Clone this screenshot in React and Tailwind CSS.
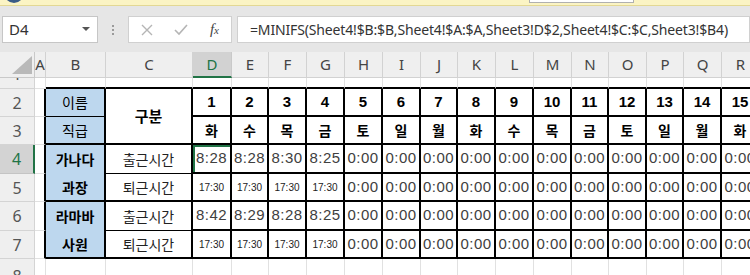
import { Fragment } from 'react';

const COLS = ['A', 'B', 'C', 'D', 'E', 'F', 'G', 'H', 'I', 'J', 'K', 'L', 'M', 'N', 'O', 'P', 'Q', 'R'];
const DAYS = ['화', '수', '목', '금', '토', '일', '월', '화', '수', '목', '금', '토', '일', '월', '화'];
const zeros = n => Array.from({ length: n }, () => '0:00');

const DATA = {
  4: ['8:28', '8:28', '8:30', '8:25', ...zeros(11)],
  5: ['17:30', '17:30', '17:30', '17:30', ...zeros(11)],
  6: ['8:42', '8:29', '8:28', '8:25', ...zeros(11)],
  7: ['17:30', '17:30', '17:30', '17:30', ...zeros(11)],
};

const NAMES = {
  2: { text: '이름', bottom: 'border-b border-b-black', bold: false },
  3: { text: '직급', bottom: 'border-b-2 border-b-black', bold: false },
  4: { text: '가나다', bottom: 'border-b-0', bold: true },
  5: { text: '과장', bottom: 'border-b-2 border-b-black', bold: true },
  6: { text: '라마바', bottom: 'border-b-0', bold: true },
  7: { text: '사원', bottom: 'border-b-2 border-b-black', bold: true },
};

const KR = "font-['Noto_Sans_CJK_KR',sans-serif]";
const rowHdr = 'flex items-center justify-center overflow-hidden bg-[#efefef] border-r border-b border-[#d4d4d4] text-[16px] text-[#555]';
const blank = 'bg-white border-r border-b border-[#e1e1e1]';
const tcell = 'flex items-center justify-center overflow-hidden bg-white border-r-2 border-b-2 border-black';

function RowHeader({ n, active }) {
  if (active) {
    return (
      <div className="flex items-center justify-center bg-[#d3d3d3] border-r-2 border-r-[#217346] border-b border-b-[#c4c4c4] text-[16px] text-[#217346]">
        {n}
      </div>
    );
  }
  return <div className={rowHdr}>{n}</div>;
}

function FormulaBar() {
  return (
    <div className="flex items-center h-[27px] mt-[10px] mb-[9px]">
      <div className="ml-[2px] w-[96px] h-full bg-white border border-[#c6c6c6] flex items-center justify-between pl-[6px] pr-[7px] text-[15px] text-[#333]">
        <span>D4</span>
        <svg width="8" height="5" viewBox="0 0 8 5"><path d="M0 0h8L4 4z" fill="#555" /></svg>
      </div>
      <div className="w-[30px] flex flex-col items-center gap-[2px]">
        <span className="w-[2px] h-[2px] bg-[#9a9a9a]" />
        <span className="w-[2px] h-[2px] bg-[#9a9a9a]" />
        <span className="w-[2px] h-[2px] bg-[#9a9a9a]" />
      </div>
      <div className="w-[104px] h-full bg-white border border-[#d0d0d0] flex items-center justify-between px-[12px]">
        <svg width="12" height="12" viewBox="0 0 12 12"><path d="M1 1l10 10M11 1L1 11" stroke="#b5b5b5" strokeWidth="1.4" /></svg>
        <svg width="14" height="12" viewBox="0 0 14 12"><path d="M1 6l4 4 8-9" stroke="#b5b5b5" strokeWidth="1.6" fill="none" /></svg>
        <span className="font-['Liberation_Serif',serif] italic text-[15px] text-[#444] leading-none">
          f<span className="text-[11px]">x</span>
        </span>
      </div>
      <div className="ml-[5px] flex-1 h-full bg-white border border-[#d0d0d0] flex items-center pl-[12px] text-[14px] tracking-[-0.15px] text-[#333] whitespace-nowrap overflow-hidden">
        =MINIFS(Sheet4!$B:$B,Sheet4!$A:$A,Sheet3!D$2,Sheet4!$C:$C,Sheet3!$B4)
      </div>
    </div>
  );
}

function DataCell({ r, i, value }) {
  const small = value === '17:30';
  const text = small
    ? "font-['Liberation_Sans',sans-serif] text-[10px] text-[#222]"
    : "font-['Liberation_Sans',sans-serif] text-[15px] tracking-[0.5px] text-[#404040]";
  if (r === 4 && i === 0) {
    return (
      <div className={`${tcell} relative ${text}`}>
        <span className="whitespace-nowrap">{value}</span>
        <div className="absolute left-0 top-0 -right-[2px] -bottom-[2px] border-2 border-[#217346]" />
        <div className="absolute -right-[5px] -bottom-[5px] w-[6px] h-[6px] bg-[#217346] border border-white" />
      </div>
    );
  }
  return (
    <div className={`${tcell} ${text}`}>
      <span className="whitespace-nowrap">{value}</span>
    </div>
  );
}

export default function App() {
  const dataCols = COLS.slice(3);
  return (
    <div className="w-[750px] h-[275px] overflow-hidden bg-[#e6e6e6] font-['Noto_Sans',sans-serif]">
      <div className="relative h-[6px] bg-[#fbf4c4] border-b border-[#e3d894] overflow-hidden">
        <div className="absolute left-[4px] -top-[17px] w-[20px] h-[20px] rounded-full bg-[#3a5c86]" />
        <div className="absolute left-[529px] -top-[10px] w-[105px] h-[13px] bg-white border border-[#b0b0b0]" />
      </div>
      <FormulaBar />

      <div className="grid grid-cols-[35px_11px_60px_87px_39px_37px_38px_38px_38px_38px_37px_38px_38px_38px_37px_38px_37px_38px_38px] grid-rows-[26px_11px_28px_28px_29px_28px_29px_28px_30px]">
        {/* column headers */}
        <div className="relative bg-[#efefef] border-r border-b border-[#c9c9c9]">
          <svg className="absolute right-[2px] bottom-[3px]" width="20" height="18" viewBox="0 0 20 18">
            <path d="M20 0V18H0z" fill="#b9b9b9" />
          </svg>
        </div>
        {COLS.map(c =>
          c === 'D' ? (
            <div key={c} className="flex items-center justify-center bg-[#d2d2d2] border-r border-[#c9c9c9] border-b-2 border-b-[#217346] text-[15px] text-[#217346]">
              {c}
            </div>
          ) : (
            <div key={c} className="flex items-center justify-center overflow-hidden bg-[#efefef] border-r border-b border-[#d2d2d2] text-[15px] text-[#444]">
              {c}
            </div>
          )
        )}

        {/* row 1 */}
        <div className="flex justify-center overflow-hidden bg-[#efefef] border-r border-b border-[#d4d4d4] text-[16px] text-[#555]">
          <span className="-mt-[16px]">1</span>
        </div>
        <div className={blank} />
        {COLS.slice(1).map(c => (
          <div key={c} className="bg-white border-r border-[#e1e1e1] border-b-2 border-b-black" />
        ))}

        {[2, 3, 4, 5, 6, 7].map(r => (
          <Fragment key={r}>
            <RowHeader n={r} active={r === 4} />
            <div className="bg-white border-b border-[#e1e1e1] border-r-2 border-r-black" />
            <div className={`flex items-center justify-center bg-[#bdd7ee] border-r-2 border-r-black ${NAMES[r].bottom} ${KR} text-[14px] text-black ${NAMES[r].bold ? 'font-bold' : ''}`}>
              {NAMES[r].text}
            </div>
            {r === 2 && (
              <div className={`row-span-2 ${tcell} ${KR} text-[15px] font-bold text-black`}>구분</div>
            )}
            {r >= 4 && (
              <div className={`flex items-center justify-center bg-white border-r-2 border-r-black ${r % 2 === 0 ? 'border-b border-b-black' : 'border-b-2 border-b-black'} ${KR} text-[14px] text-[#222]`}>
                {r % 2 === 0 ? '출근시간' : '퇴근시간'}
              </div>
            )}
            {dataCols.map((c, i) => {
              if (r === 2) {
                return (
                  <div key={c} className={`${tcell} font-['Liberation_Sans',sans-serif] font-bold text-[15px] text-black`}>
                    {i + 1}
                  </div>
                );
              }
              if (r === 3) {
                return (
                  <div key={c} className={`${tcell} ${KR} font-bold text-[14px] text-black`}>
                    {DAYS[i]}
                  </div>
                );
              }
              return <DataCell key={c} r={r} i={i} value={DATA[r][i]} />;
            })}
          </Fragment>
        ))}

        {/* row 8 */}
        <div className="flex justify-center items-start overflow-hidden bg-[#efefef] border-r border-[#d4d4d4] text-[16px] text-[#555]">
          <span className="mt-[5px]">8</span>
        </div>
        {COLS.map(c => (
          <div key={c} className="bg-white border-r border-[#e1e1e1]" />
        ))}
      </div>
    </div>
  );
}
